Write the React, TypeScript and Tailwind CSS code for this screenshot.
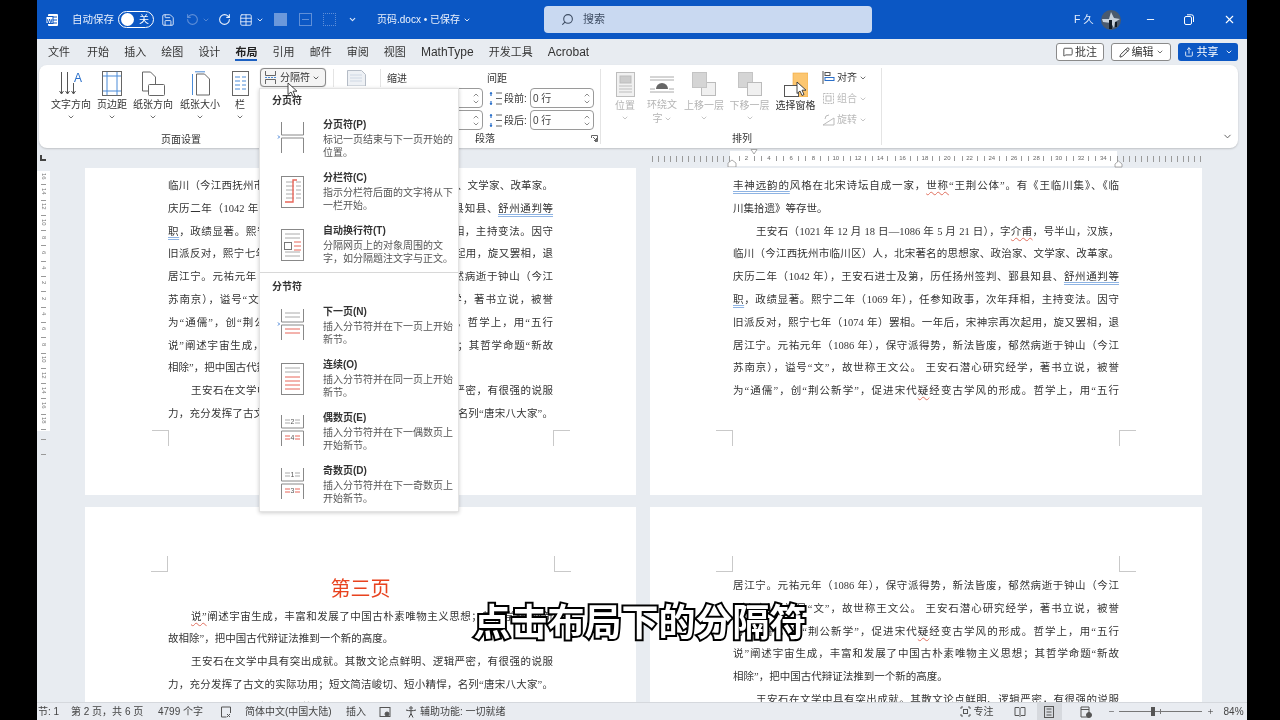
import { ChevronDown, ChevronUp, Minus, Plus, Search, X, Pencil, MessageSquare, Share, RotateCw, RotateCcw, Save, Table } from "lucide-react";
import React from "react";

const Chev = ({ className = "text-[#555]" }: { className?: string }) => <ChevronDown size={8} strokeWidth={2.5} className={className} />;

const Blue = ({ children }: { children: React.ReactNode }) => (
  <span className="underline decoration-double decoration-[#8fb4e3] underline-offset-2">{children}</span>
);
const Red = ({ children }: { children: React.ReactNode }) => (
  <span className="underline decoration-wavy decoration-[#e0705f] decoration-1 underline-offset-2">{children}</span>
);

const Line = ({ children, last, indent }: { children: React.ReactNode; last?: boolean; indent?: boolean }) => (
  <p className={`h-[22.8px] leading-[22.8px] whitespace-nowrap text-justify ${last ? "" : "[text-align-last:justify]"} ${indent ? "pl-[23px]" : ""}`}>
    {children}
  </p>
);

const L1 = () => <Line>临川（今江西抚州市临川区）人，北宋著名的思想家、政治家、文学家、改革家。</Line>;
const L2 = () => <Line>庆历二年（1042 年），王安石进士及第，历任扬州签判、鄞县知县、<Blue>舒州通判等</Blue></Line>;
const L3 = () => <Line><Blue>职</Blue>，政绩显著。熙宁二年（1069 年），任参知政事，次年拜相，主持变法。因守</Line>;
const L4 = () => <Line>旧派反对，熙宁七年（1074 年）罢相。一年后，宋神宗再次起用，旋又罢相，退</Line>;
const L5 = () => <Line>居江宁。元祐元年（1086 年），保守派得势，新法皆废，郁然病逝于钟山（今江</Line>;
const L6 = () => <Line>苏南京），谥号“文”，故世称王文公。 王安石潜心研究经学，著书立说，被誉</Line>;
const L7 = () => <Line>为“通儒”，创“荆公新学”，促进宋代<Red>疑</Red>经变古学风的形成。哲学上，用“五行</Line>;

const Corner = ({ className }: { className: string }) => <div className={`absolute w-[17px] h-[16px] border-[#c9c9c9] ${className}`} />;

const Page = ({ className = "", children }: { className?: string; children: React.ReactNode }) => (
  <div className={`relative bg-white overflow-hidden px-[83px] text-[10.5px] text-[#333] [font-family:'Liberation_Serif','Noto_Sans_CJK_SC',serif] ${className}`}>
    {children}
  </div>
);

const RibbonBtn = ({ label, w, icon, off, chev = true }: { label: React.ReactNode; w: number; icon: React.ReactNode; off?: boolean; chev?: boolean }) => (
  <div className={`flex flex-col items-center text-[10px] leading-[13px] ${off ? "text-[#b4b4b4]" : "text-[#333]"}`} style={{ width: w }}>
    <div className="h-[26px] flex items-center justify-center">{icon}</div>
    <div className="mt-[2px] whitespace-nowrap">{label}</div>
    {chev && <div className="mt-[2px]"><Chev className={off ? "text-[#bbb]" : "text-[#555]"} /></div>}
  </div>
);

const Spin = ({ text, w = "w-[64px]" }: { text?: string; w?: string }) => (
  <div className={`${w} h-[20px] border border-[#9a9a9a] rounded-[4px] flex items-center justify-between pl-[2px] pr-[2px] text-[10px] text-[#444]`}>
    <span>{text}</span>
    <div className="flex flex-col text-[#555] -space-y-[1px]"><ChevronUp size={8} /><ChevronDown size={8} /></div>
  </div>
);

const SpaceIcon = () => (
  <svg width="15" height="15" viewBox="0 0 15 15">
    <path d="M3 1v4M3 14v-4" stroke="#2a6fc9" strokeWidth="1.2" />
    <path d="M1.5 3 3 1l1.5 2zM1.5 12 3 14l1.5-2z" fill="#2a6fc9" />
    <path d="M8 2h6M8 7.500h6M8 13h6" stroke="#666" />
  </svg>
);

const MenuIcon = ({ children }: { children: React.ReactNode }) => (
  <svg width="30" height="36" viewBox="0 0 30 36" className="shrink-0 mt-[2px]">{children}</svg>
);

const Doc = () => <rect x="5.500" y="3.500" width="22" height="31" fill="#fff" stroke="#888" />;
const G = "#aaa";
const R = "#e8665a";

const menuA = [
  {
    title: "分页符(P)", d1: "标记一页结束与下一页开始的", d2: "位置。",
    icon: <><path d="M5.500 2v13h22V2M5.500 33V18h22v15" fill="none" stroke="#888" /><path d="M2 15.500l1.500 1.500L2 18.500" fill="none" stroke="#3a7bd5" /></>,
  },
  {
    title: "分栏符(C)", d1: "指示分栏符后面的文字将从下", d2: "一栏开始。",
    icon: <><Doc /><path d="M10 9h8M10 13h8M10 17h8M10 21h8M10 25h8M20 9h5M20 13h5M20 17h5M20 21h5M20 25h5" stroke={G} /><path d="M9 29h8V7h4" fill="none" stroke={R} strokeWidth="1.400" /></>,
  },
  {
    title: "自动换行符(T)", d1: "分隔网页上的对象周围的文", d2: "字，如分隔题注文字与正文。",
    icon: <><Doc /><path d="M9 8h15M9 12h15M9 30h15M9 26h15" stroke={G} /><rect x="8.500" y="16.500" width="7" height="7" fill="none" stroke="#777" /><path d="M18 16h7M18 20h7M18 24h7" stroke={R} /></>,
  },
];

const menuB = [
  {
    title: "下一页(N)", d1: "插入分节符并在下一页上开始", d2: "新节。",
    icon: <><path d="M5.500 2v13h22V2M5.500 33V18h22v15" fill="none" stroke="#888" /><path d="M9 6h15M9 10h15" stroke={G} /><path d="M9 22h15M9 26h15" stroke={R} /><path d="M2 15.500l1.500 1.500L2 18.500" fill="none" stroke="#3a7bd5" /></>,
  },
  {
    title: "连续(O)", d1: "插入分节符并在同一页上开始", d2: "新节。",
    icon: <><Doc /><path d="M9 8h15M9 12h15" stroke={G} /><path d="M9 17h15M9 21h15M9 25h15M9 29h15" stroke={R} /></>,
  },
  {
    title: "偶数页(E)", d1: "插入分节符并在下一偶数页上", d2: "开始新节。",
    icon: <><path d="M5.500 2v13h22V2M5.500 33V18h22v15" fill="none" stroke="#888" /><path d="M9 7h5M9 10h5M19 7h5M19 10h5" stroke={G} /><path d="M9 23h5M9 26h5M19 23h5M19 26h5" stroke={R} /><text x="16.500" y="11" fontSize="7" textAnchor="middle" fill="#555">2</text><text x="16.500" y="27" fontSize="7" textAnchor="middle" fill="#555">4</text></>,
  },
  {
    title: "奇数页(D)", d1: "插入分节符并在下一奇数页上", d2: "开始新节。",
    icon: <><path d="M5.500 2v13h22V2M5.500 33V18h22v15" fill="none" stroke="#888" /><path d="M9 7h5M9 10h5M19 7h5M19 10h5" stroke={G} /><path d="M9 23h5M9 26h5M19 23h5M19 26h5" stroke={R} /><text x="16.500" y="11" fontSize="7" textAnchor="middle" fill="#555">1</text><text x="16.500" y="27" fontSize="7" textAnchor="middle" fill="#555">3</text></>,
  },
];

const MenuItem = ({ item }: { item: (typeof menuA)[number] }) => (
  <div className="h-[53px] flex pl-[16px]">
    <MenuIcon>{item.icon}</MenuIcon>
    <div className="ml-[17px] text-[10px] leading-[13px] text-[#555] whitespace-nowrap">
      <div className="font-bold text-[#333] mb-[2px]">{item.title}</div>
      <div>{item.d1}</div>
      <div>{item.d2}</div>
    </div>
  </div>
);

const BreakMenu = () => (
  <div className="absolute left-[222px] top-[88px] w-[200px] h-[424px] bg-white border border-[#e3e3e3] shadow-[0_1px_4px_rgba(0,0,0,0.2)] z-20">
    <div className="pl-[12px] pt-[4px] h-[28px] text-[10px] font-bold text-[#333]">分页符</div>
    <div className="pt-[1px]">
      {menuA.map((m) => <MenuItem key={m.title} item={m} />)}
    </div>
    <div className="border-t border-[#d8d8d8] mt-[-5px]" />
    <div className="pl-[12px] pt-[6px] h-[26px] text-[10px] font-bold text-[#333]">分节符</div>
    <div className="pt-[6px]">
      {menuB.map((m) => <MenuItem key={m.title} item={m} />)}
    </div>
  </div>
);

const Cursor = ({ className }: { className: string }) => (
  <svg width="11" height="16" viewBox="0 0 11 16" className={`absolute z-30 ${className}`}>
    <path d="M1 1v11.500l3-2.500 2 4.500 2-1-2-4.300h4z" fill="#fff" stroke="#333" strokeWidth="0.900" />
  </svg>
);

const HTicks = ({ n }: { n: number }) => (
  <div className="flex items-center justify-between h-[8px]" style={{ width: n * 5.6 }}>
    {Array.from({ length: n }).map((_, i) => <div key={i} className="w-px h-[6px] bg-[#9a9a9a]" />)}
  </div>
);

const nums = [2, 4, 6, 8, 10, 12, 14, 16, 18, 20, 22, 24, 26, 28, 30, 32, 34];

export default function App() {
  return (
    <div className="relative w-[1280px] h-[720px] overflow-hidden bg-black flex blur-[0.3px] [font-family:'Liberation_Sans','Noto_Sans_CJK_SC',sans-serif]">
      <div className="w-[37px] shrink-0 bg-black" />
      <div className="relative w-[1210px] h-[720px] flex flex-col bg-[#e8ecf1]">
        {/* title bar */}
        <div className="h-[39px] shrink-0 bg-[#0b57c4] text-white flex items-center text-[10.5px]">
          <svg width="14" height="14" viewBox="0 0 14 14" className="ml-[8px]">
            <rect x="3" y="1" width="10" height="12" rx="1" fill="#fff" />
            <path d="M7 4h5M7 7h5M7 10h5" stroke="#0b57c4" />
            <rect x="1" y="3.500" width="7" height="7" fill="#fff" stroke="#0b57c4" />
            <text x="4.500" y="9.500" fontSize="6" fontWeight="700" textAnchor="middle" fill="#0b57c4">W</text>
          </svg>
          <span className="ml-[13px] text-[#e6eefb]">自动保存</span>
          <div className="ml-[4px] w-[36px] h-[17px] rounded-full border border-white flex items-center justify-between pl-[2px] pr-[4px]">
            <div className="w-[13px] h-[13px] rounded-full bg-white" />
            <span className="text-[10px]">关</span>
          </div>
          <Save size={14} strokeWidth={1.5} className="ml-[7px] text-[#eaf0fb]" />
          <RotateCcw size={13} className="ml-[11px] text-[#5f8fd8]" />
          <Chev className="ml-[3px] text-[#5f8fd8]" />
          <RotateCw size={13} className="ml-[8px] text-[#eaf0fb]" />
          <Table size={14} strokeWidth={1.5} className="ml-[8px] text-[#eaf0fb]" />
          <Chev className="ml-[3px] text-white" />
          <div className="ml-[10px] w-[13px] h-[13px] bg-[#6b98db]" />
          <div className="ml-[12px] w-[13px] h-[13px] border border-[#5f8fd8] flex items-center justify-center"><div className="w-[7px] h-px bg-[#5f8fd8]" /></div>
          <div className="ml-[11px] w-[13px] h-[13px] border border-dotted border-[#5f8fd8]" />
          <ChevronDown size={9} strokeWidth={3} className="ml-[12px] text-[#dfe8f8]" />
          <span className="ml-[20px] text-[10px] text-[#eef3fc] whitespace-nowrap">页码.docx • 已保存</span>
          <Chev className="ml-[3px] text-white" />
          <div className="ml-[73px] w-[328px] h-[27px] rounded-[4px] bg-[#c9d9f1] flex items-center pl-[17px] text-[#3e4d63]">
            <Search size={13} className="-scale-x-100" />
            <span className="ml-[9px] text-[11px]">搜索</span>
          </div>
          <span className="ml-[202px] text-[10.5px] text-[#e6eefb] whitespace-nowrap">F 久</span>
          <svg width="20" height="20" viewBox="0 0 20 20" className="ml-[7px]">
            <circle cx="10" cy="10" r="10" fill="#4a5a6e" />
            <path d="M1 9h7l2-7 3 6 6 1-5 3-1 6-3-5-8-1z" fill="#c7d1dc" />
            <path d="M8 10h3v9H8zM14 12h2v5h-2z" fill="#111b26" />
          </svg>
          <Minus size={11} className="ml-[24px]" />
          <svg width="11" height="11" viewBox="0 0 11 11" className="ml-[27px]" fill="none" stroke="#fff">
            <rect x="1.500" y="2.500" width="7" height="8" rx="1.500" /><path d="M4 .8h4.500a2 2 0 0 1 2 2V8" />
          </svg>
          <X size={13} className="ml-[29px]" />
        </div>

        {/* tabs */}
        <div className="h-[26px] shrink-0 flex items-center pl-[11px] text-[11px] text-[#333] gap-[15.1px] whitespace-nowrap">
          <span>文件</span><span className="ml-[2px]">开始</span><span>插入</span><span>绘图</span><span>设计</span>
          <span className="relative font-bold text-[#222]">布局<span className="absolute left-0 right-0 top-[15px] h-[2px] bg-[#1b5fc1]" /></span>
          <span>引用</span><span>邮件</span><span>审阅</span><span>视图</span>
          <span className="text-[12px]">MathType</span><span>开发工具</span><span className="text-[12px]">Acrobat</span>
          <div className="ml-auto mr-[9px] flex gap-[7px] text-[11px]">
            <div className="w-[48px] h-[18px] bg-white border border-[#8a8a8a] rounded-[3px] flex items-center justify-center gap-[2px]"><MessageSquare size={10} />批注</div>
            <div className="w-[60px] h-[18px] bg-white border border-[#8a8a8a] rounded-[3px] flex items-center justify-center gap-[2px]"><Pencil size={11} />编辑<Chev /></div>
            <div className="w-[60px] h-[18px] bg-[#0b57c4] text-white rounded-[3px] flex items-center justify-center gap-[3px]"><Share size={10} />共享<Chev className="ml-[3px] text-white" /></div>
          </div>
        </div>

        {/* ribbon */}
        <div className="h-[83px] shrink-0 ml-[2px] w-[1199px] bg-white rounded-lg shadow-[0_1px_2px_rgba(0,0,0,0.18)] flex">
          <div className="w-[294px] shrink-0 flex flex-col">
            <div className="h-[68px] pt-[5px] pl-[12px] flex items-start">
              <RibbonBtn w={40} label="文字方向" icon={
                <svg width="24" height="25" viewBox="0 0 24 25" fill="none" stroke="#555">
                  <path d="M2.500 1v22M.5 20l2 3 2-3M8.500 1v22M6.500 20l2 3 2-3M14.500 12v11M12.500 20l2 3 2-3" />
                  <text x="19" y="11" fontSize="12" fill="#2a6fc9" stroke="none" textAnchor="middle">A</text>
                </svg>
              } />
              <div className="w-[6px]" />
              <RibbonBtn w={30} label="页边距" icon={
                <svg width="20" height="25" viewBox="0 0 20 25" fill="none">
                  <rect x=".5" y=".5" width="19" height="24" stroke="#666" />
                  <path d="M5 1v23M15 1v23M1 5h18M1 20h18" stroke="#4a8bd8" />
                </svg>
              } />
              <div className="w-[6px]" />
              <RibbonBtn w={40} label="纸张方向" icon={
                <svg width="24" height="25" viewBox="0 0 24 25" fill="#fff" stroke="#666">
                  <path d="M1.500 1h8l5 5v14h-13z" /><rect x="7.500" y="13.500" width="16" height="11" rx="1" />
                </svg>
              } />
              <div className="w-[7px]" />
              <RibbonBtn w={40} label="纸张大小" icon={
                <svg width="19" height="25" viewBox="0 0 19 25" fill="none">
                  <path d="M5.500 3h8l5 5v16h-13z" stroke="#666" />
                  <path d="M1.500 3v21M4 .8h10" stroke="#4a8bd8" />
                </svg>
              } />
              <div className="w-[8px]" />
              <RibbonBtn w={24} label="栏" icon={
                <svg width="17" height="25" viewBox="0 0 17 25" fill="none">
                  <rect x=".5" y=".5" width="16" height="24" stroke="#666" />
                  <path d="M3 6h5M3 10h5M3 14h5M3 18h5M10 6h4M10 10h4M10 14h4M10 18h4" stroke="#4a8bd8" />
                </svg>
              } />
              <div className="ml-[8px] mt-[-2px] w-[66px] h-[19px] border border-[#8a8a8a] rounded-[4px] bg-[#f4f4f4] flex items-center pl-[3px] text-[10px] text-[#333] shadow-[0_0_1px_rgba(0,0,0,.3)]">
                <svg width="13" height="13" viewBox="0 0 13 13" fill="none" stroke="#666">
                  <path d="M1.500 0v4.500h10V0M1.500 13V8.500h10V13" /><path d="M1 6.500h11" stroke="#4a8bd8" strokeDasharray="2 1" />
                </svg>
                <span className="ml-[3px]">分隔符</span>
                <Chev className="ml-[2px] text-[#444]" />
              </div>
            </div>
            <div className="text-center pr-[10px] text-[10px] leading-[13px] text-[#333]">页面设置</div>
          </div>

          <div className="w-[268px] shrink-0 flex flex-col border-r border-[#e4e4e4] my-[4px]">
            <div className="h-[18px] flex items-center text-[10px] text-[#333] border-l border-[#e4e4e4]">
              <svg width="19" height="16" viewBox="0 0 19 16" className="ml-[13px]" fill="#eef1f5" stroke="#b5bcc6">
                <path d="M.5.500h14l4 4V16H.5z" /><path d="M3 5h12M3 8h12M3 11h12" stroke="#cfd8e4" />
              </svg>
              <div className="ml-[14px] w-px h-[18px] bg-[#e4e4e4]" />
              <span className="ml-[6px]">缩进</span>
              <span className="ml-[80px]">间距</span>
            </div>
            <div className="flex items-center mt-[1px] text-[10px] text-[#333]">
              <div className="ml-[66px]"><Spin w="w-[84px]" /></div>
              <div className="ml-[5px]"><SpaceIcon /></div>
              <span className="ml-[1px] w-[26px]">段前:</span>
              <Spin text="0 行" />
            </div>
            <div className="flex items-center mt-[2px] text-[10px] text-[#333]">
              <div className="ml-[66px]"><Spin w="w-[84px]" /></div>
              <div className="ml-[5px]"><SpaceIcon /></div>
              <span className="ml-[1px] w-[26px]">段后:</span>
              <Spin text="0 行" />
            </div>
            <div className="relative mt-[2px] pl-[142px] text-[10px] leading-[13px] text-[#333]">
              段落
              <svg width="7" height="7" viewBox="0 0 7 7" className="absolute right-[2px] top-[3px]" fill="none" stroke="#666"><path d="M.5 3V.5H6.500V6.500H4M2 2l3.500 3.500M3 5.500h2.500V3" /></svg>
            </div>
          </div>

          <div className="w-[281px] shrink-0 flex flex-col border-r border-[#e4e4e4] my-[3px]">
            <div className="h-[66px] pt-[3px] pl-[10px] flex items-start">
              <RibbonBtn off w={28} label="位置" icon={
                <svg width="19" height="25" viewBox="0 0 19 25" fill="#f1f1f1" stroke="#bdbdbd"><rect x=".5" y=".5" width="18" height="24" /><rect x="4" y="4" width="11" height="7" fill="#ccc" /><path d="M3 14h13M3 17h13M3 20h13" /></svg>
              } />
              <div className="w-[7px]" />
              <div className="w-[32px] flex flex-col items-center text-[10px] leading-[13px] text-[#b4b4b4]">
                <div className="h-[26px] flex items-center">
                  <svg width="24" height="18" viewBox="0 0 24 18" fill="none" stroke="#aaa"><path d="M0 2h24M0 5h24M0 14h5M19 14h5M0 17h24" /><path d="M6 14a6 6 0 0 1 12 0z" fill="#666" stroke="none" /></svg>
                </div>
                <div className="mt-[1px] whitespace-nowrap">环绕文</div>
                <div className="mt-[1px] flex items-center gap-[1px]">字<Chev className="text-[#bbb]" /></div>
              </div>
              <div className="w-[7px]" />
              <RibbonBtn off w={38} label="上移一层" icon={
                <svg width="24" height="24" viewBox="0 0 24 24"><rect x="9.500" y="10.500" width="14" height="13" fill="#f0f0f0" stroke="#bbb" /><rect x=".5" y=".5" width="14" height="15" fill="#d5d5d5" stroke="#c4c4c4" /></svg>
              } />
              <div className="w-[7px]" />
              <RibbonBtn off w={39} label="下移一层" icon={
                <svg width="24" height="24" viewBox="0 0 24 24"><rect x=".5" y=".5" width="14" height="15" fill="#d5d5d5" stroke="#c4c4c4" /><rect x="9.500" y="10.500" width="14" height="13" fill="#f0f0f0" stroke="#bbb" /></svg>
              } />
              <div className="w-[7px]" />
              <RibbonBtn chev={false} w={39} label="选择窗格" icon={
                <svg width="24" height="25" viewBox="0 0 24 25"><rect x="9" y="1" width="15" height="24" fill="#fcc670" stroke="#eda73d" strokeWidth=".6" /><rect x=".5" y="13.500" width="14" height="11" fill="#fff" stroke="#555" /></svg>
              } />
              <div className="ml-[7px] flex flex-col gap-[8px] text-[10px] leading-[13px]">
                <div className="flex items-center gap-[2px] text-[#333]">
                  <svg width="13" height="13" viewBox="0 0 13 13" fill="none"><path d="M1 0v13" stroke="#555" /><rect x="3" y="1.500" width="5" height="3" stroke="#555" /><rect x="3" y="6.500" width="9" height="3" stroke="#2a6fc9" /></svg>
                  对齐<Chev />
                </div>
                <div className="flex items-center gap-[2px] text-[#bbb]">
                  <svg width="13" height="13" viewBox="0 0 13 13" fill="none" stroke="#bbb"><rect x="1.500" y="1.500" width="10" height="10" strokeDasharray="2 1" /><rect x="4" y="4" width="5" height="5" /></svg>
                  组合<Chev className="text-[#bbb]" />
                </div>
                <div className="flex items-center gap-[2px] text-[#bbb]">
                  <svg width="13" height="13" viewBox="0 0 13 13" fill="none" stroke="#bbb"><path d="M1 12h11V5zM3 6a4 4 0 0 1 4-4" /></svg>
                  旋转<Chev className="text-[#bbb]" />
                </div>
              </div>
            </div>
            <div className="text-center pl-[2px] text-[10px] leading-[13px] text-[#333] mt-[3px]">排列</div>
          </div>

          <div className="flex-1 flex items-end justify-end pr-[5px] pb-[6px]"><ChevronDown size={11} className="text-[#555]" /></div>
        </div>

        {/* horizontal ruler */}
        <div className="h-[20px] shrink-0 flex items-center relative">
          <div className="absolute left-[3px] top-[7px] w-[6px] h-[6px] border-l-2 border-b-2 border-[#444]" />
          <div className="ml-[615px] flex items-center h-[15px] mt-[1px]">
            <HTicks n={14} />
            <div className="w-[387px] h-[15px] bg-white flex items-center pl-[5px] text-[6px] text-[#666]">
              {nums.map((n) => (
                <div key={n} className="w-[22.3px] shrink-0 flex items-center justify-center gap-[3px]">
                  <span className="w-px h-[5px] bg-[#999]" />
                  <span className="w-[8px] text-center">{n}</span>
                  <span className="w-px h-[5px] bg-[#999]" />
                </div>
              ))}
            </div>
            <HTicks n={15} />
          </div>
          <svg width="10" height="18" viewBox="0 0 10 18" className="absolute left-[690px] top-[1px]" fill="#fff" stroke="#888" strokeWidth=".7">
            <path d="M1 14l4-3 4 3v4H1z" />
          </svg>
          <svg width="8" height="6" viewBox="0 0 8 6" className="absolute left-[713px] top-[1px]" fill="#fff" stroke="#888" strokeWidth=".7"><path d="M1 .5h6L4 5z" /></svg>
          <svg width="9" height="8" viewBox="0 0 9 8" className="absolute left-[1077px] top-[12px]" fill="#fff" stroke="#888" strokeWidth=".7"><path d="M1 7V4l3.500-3L8 4v3z" /></svg>
        </div>

        {/* document area */}
        <div className="flex-1 min-h-0 flex overflow-hidden">
          <div className="w-[13px] shrink-0">
            <div className="h-[260px] mt-[3px] bg-white flex flex-col items-center text-[6px] text-[#777] leading-none">
              {[16, 14, 12, 10, 8, 6, 4, 2, 2, 4, 6, 8, 10, 12, 14, 16, 18].map((n, i) => (
                <div key={i} className="h-[15.3px] shrink-0 flex flex-col items-center justify-between">
                  <span className="[writing-mode:vertical-rl] h-[10px] text-center">{n}</span>
                  <span className="w-[5px] h-px bg-[#999] mb-[1px]" />
                </div>
              ))}
            </div>
            <div className="flex flex-col items-center gap-[14px] mt-[8px]">
              <span className="w-[5px] h-px bg-[#999]" /><span className="w-[5px] h-px bg-[#999]" />
            </div>
          </div>
          <div className="ml-[35px] grid grid-cols-[551px_552px] grid-rows-[327px_240px] gap-x-[14px] gap-y-[12px] shrink-0">
            <Page className="pt-[7px]">
              <L1 /><L2 /><L3 /><L4 /><L5 /><L6 /><L7 />
              <Line>说”阐述宇宙生成，丰富和发展了中国古朴素唯物主义思想；其哲学命题“新故</Line>
              <Line last>相除”，把中国古代辩证法推到一个新的高度。</Line>
              <Line indent>王安石在文学中具有突出成就。其散文论点鲜明、逻辑严密，有很强的说服</Line>
              <Line>力，充分发挥了古文的实际功用；短文简洁峻切、短小精悍，名列“唐宋八大家”。</Line>
              <Corner className="left-[67px] top-[262px] border-t border-r" />
              <Corner className="left-[468px] top-[262px] border-t border-l" />
            </Page>
            <Page className="pt-[7px]">
              <Line><Blue>丰神远韵的</Blue>风格在北宋诗坛自成一家，<Red>世称</Red>“王荆公体”。有《王临川集》、《临</Line>
              <Line last>川集拾遗》等存世。</Line>
              <Line indent>王安石（1021 年 12 月 18 日—1086 年 5 月 21 日），字<Red>介甫</Red>，号半山，汉族，</Line>
              <L1 /><L2 /><L3 /><L4 /><L5 /><L6 /><L7 />
              <Corner className="left-[66px] top-[262px] border-t border-r" />
              <Corner className="left-[469px] top-[262px] border-t border-l" />
            </Page>
            <Page className="pt-[69px]">
              <div className="h-[29.6px] leading-[26px] text-center text-[20px] text-[#e8431f]">第三页</div>
              <Line indent><Red>说”</Red>阐述宇宙生成，丰富和发展了中国古朴素唯物主义思想；其哲学命题“新</Line>
              <Line last>故相除”，把中国古代辩证法推到一个新的高度。</Line>
              <Line indent>王安石在文学中具有突出成就。其散文论点鲜明、逻辑严密，有很强的说服</Line>
              <Line>力，充分发挥了古文的实际功用；短文简洁峻切、短小精悍，名列“唐宋八大家”。</Line>
              <Line indent>王安石潜心研究经学，著书立说，被誉为“通儒”，创“荆公新学”，促进宋代</Line>
              <Corner className="left-[66px] top-[49px] border-b border-r" />
              <Corner className="left-[469px] top-[49px] border-b border-l" />
            </Page>
            <Page className="pt-[68px]">
              <L5 /><L6 /><L7 />
              <Line>说”阐述宇宙生成，丰富和发展了中国古朴素唯物主义思想；其哲学命题“新故</Line>
              <Line last>相除”，把中国古代辩证法推到一个新的高度。</Line>
              <Line indent>王安石在文学中具有突出成就。其散文论点鲜明、逻辑严密，有很强的说服</Line>
              <Corner className="left-[66px] top-[49px] border-b border-r" />
              <Corner className="left-[469px] top-[49px] border-b border-l" />
            </Page>
          </div>
        </div>

        {/* status bar */}
        <div className="h-[18px] shrink-0 relative z-10 bg-[#e9ecf1] border-t border-[#d5d8dd] flex items-center text-[10px] text-[#444] whitespace-nowrap">
          <span className="ml-[1px] w-[33px]">节: 1</span>
          <span className="w-[87px]">第 2 页，共 6 页</span>
          <span className="w-[62px]">4799 个字</span>
          <svg width="12" height="12" viewBox="0 0 12 12" fill="none" stroke="#555"><path d="M1.500 1h9v6M1.500 1v10h5" /><path d="M7 8l3 3M10 8l-3 3" /></svg>
          <span className="ml-[13px] w-[101px]">简体中文(中国大陆)</span>
          <span className="w-[33px]">插入</span>
          <svg width="12" height="12" viewBox="0 0 12 12" fill="none" stroke="#555"><rect x="1" y="1.500" width="10" height="9" /><circle cx="8" cy="8" r="2" fill="#555" /></svg>
          <svg width="13" height="12" viewBox="0 0 13 12" fill="none" stroke="#444" className="ml-[14px]"><circle cx="6" cy="2" r="1.200" /><path d="M1 4c3 1 7 1 10 0M6 4.500v3l-2 4M6 7.500l2 4" /></svg>
          <span className="ml-[2px]">辅助功能: 一切就绪</span>
          <svg width="11" height="11" viewBox="0 0 11 11" fill="none" stroke="#555" className="ml-[454px]"><path d="M1 3V1h2M8 1h2v2M10 8v2H8M3 10H1V8" /><rect x="3.500" y="3.500" width="4" height="4" /></svg>
          <span className="ml-[3px] w-[40px]">专注</span>
          <svg width="12" height="11" viewBox="0 0 12 11" fill="none" stroke="#555"><path d="M1 1.500h4l1 1 1-1h4v8H7l-1 1-1-1H1zM6 2.500v7" /></svg>
          <div className="ml-[11px] w-[25px] h-[17px] bg-[#d6d9de] flex items-center justify-center">
            <svg width="10" height="12" viewBox="0 0 10 12" fill="none" stroke="#555"><rect x=".5" y=".5" width="9" height="11" /><path d="M2.500 3h5M2.500 6h5M2.500 9h5" /></svg>
          </div>
          <svg width="12" height="12" viewBox="0 0 12 12" fill="none" stroke="#555" className="ml-[18px]"><path d="M1 1h8v10H1zM1 3.500h8" /><circle cx="9" cy="9" r="2.500" fill="#555" /></svg>
          <Minus size={7} className="ml-[16px]" />
          <div className="ml-[4px] relative w-[83px] h-px bg-[#777]">
            <div className="absolute left-[32px] -top-[4px] w-[4px] h-[9px] bg-[#555]" />
            <div className="absolute left-[41px] -top-[2px] w-px h-[5px] bg-[#777]" />
          </div>
          <Plus size={7} className="ml-[5px]" />
          <span className="ml-[10px]">84%</span>
        </div>

        <BreakMenu />
        <Cursor className="left-[250px] top-[82px]" />
        <Cursor className="left-[759px] top-[81px]" />
      </div>
      <div className="flex-1 bg-black" />

      <div className="absolute left-0 right-0 top-[602px] text-center z-30 text-[37px] leading-[44px] font-bold text-white [-webkit-text-stroke:4px_#000] [paint-order:stroke_fill]">
        点击布局下的分隔符
      </div>
    </div>
  );
}
